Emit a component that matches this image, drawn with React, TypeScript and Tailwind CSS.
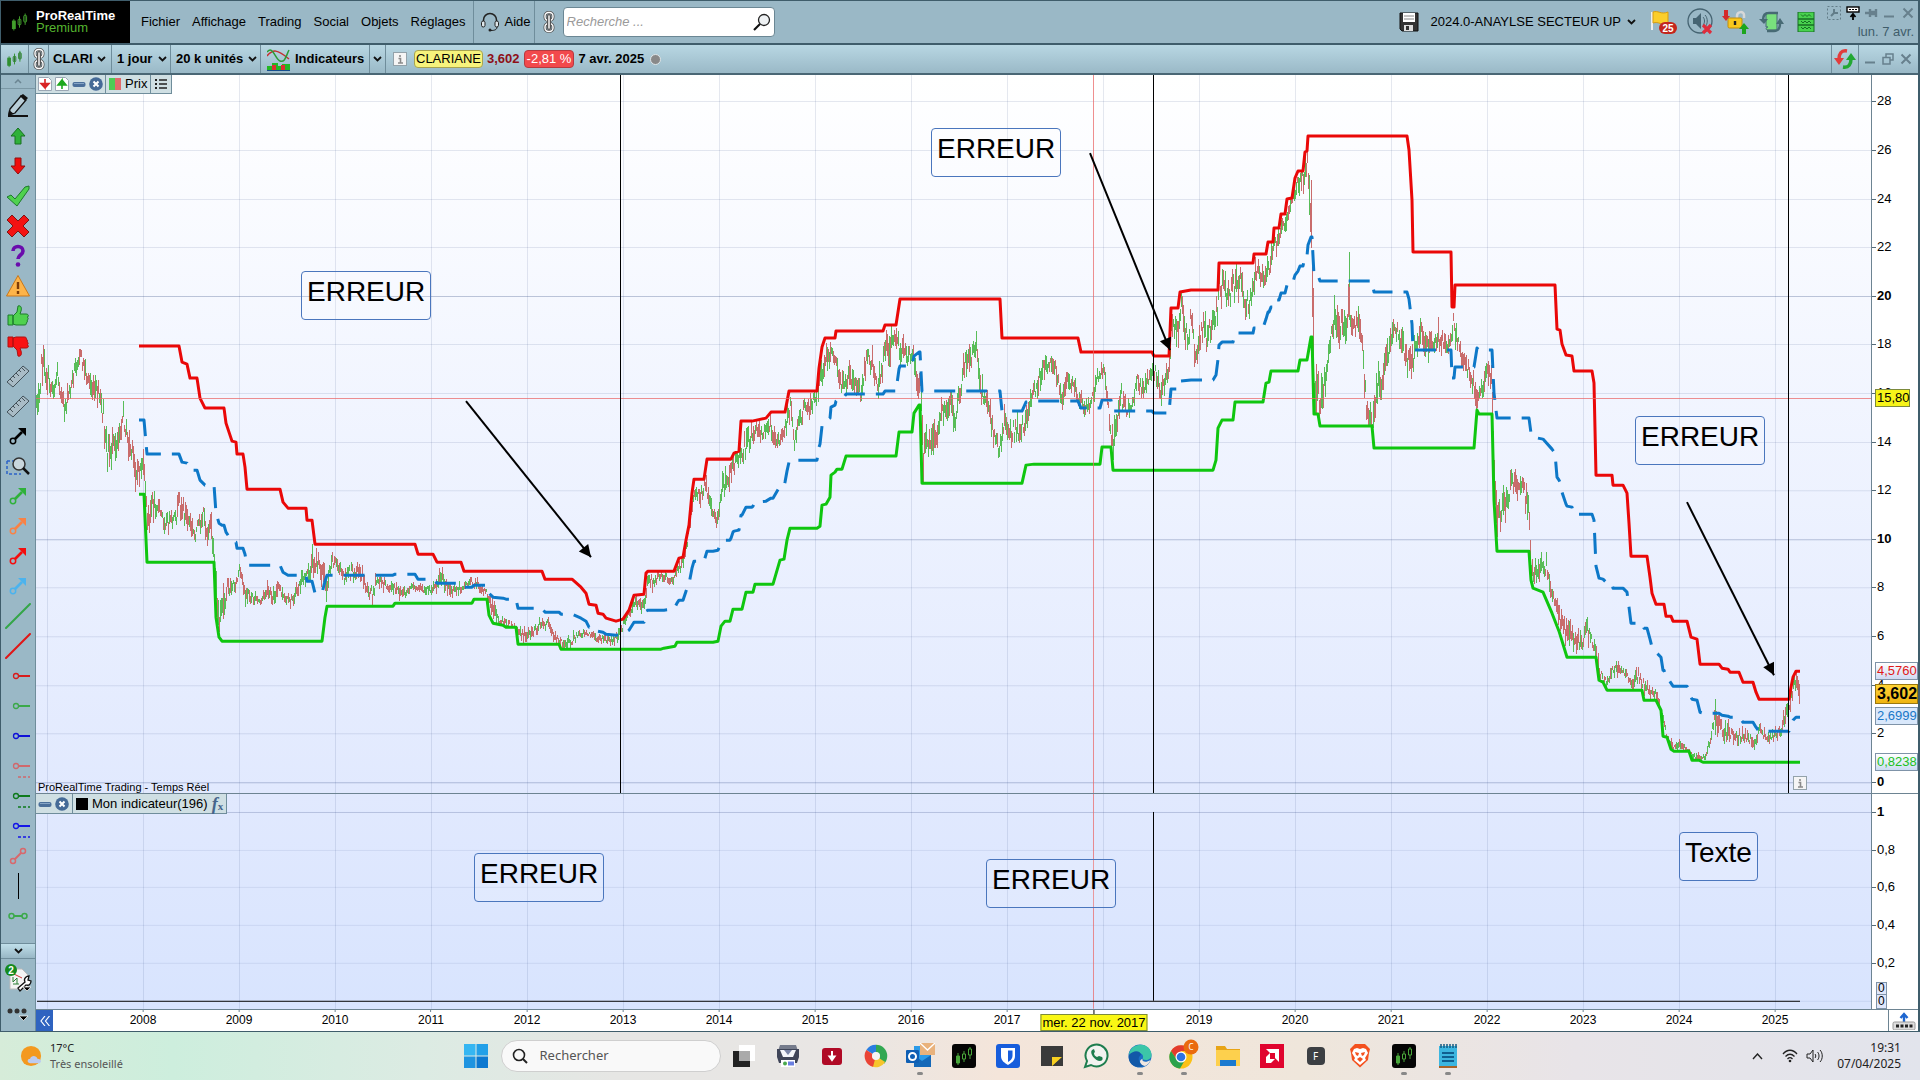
import React from 'react';

type Pt = [number, number];

const parse = (s: string): Pt[] =>
  s.trim().split(/\s+/).map((p) => p.split(',').map(Number) as Pt);

const upper = parse(`139,346 179,346 182,362 187,364 190,378 197,378 200,398 205,408 224,408 226,423 232,441 236,442 237,454 243,454 245,467 247,489 280,489 283,502 288,508 306,508 307,520 312,520 315,544 415,544 418,554 433,554 437,562 461,562 464,571 542,571 545,579 572,579 581,587 586,593 589,604 596,605 598,613 603,614 606,618 616,621 623,619 629,610 634,595 644,594 646,573 648,571 674,571 679,558 683,557 686,540 689,525 692,493 694,479 704,479 707,459 731,459 734,453 739,451 741,421 752,421 766,418 771,412 785,412 789,391 817,391 819,368 822,347 825,338 835,338 836,331 883,331 885,325 896,325 900,299 1000,299 1002,338 1078,338 1081,352 1152,352 1154,356 1169,356 1171,308 1178,308 1180,292 1191,290 1218,290 1219,263 1253,263 1254,254 1266,254 1268,242 1273,242 1274,228 1279,228 1281,214 1285,214 1287,199 1292,198 1295,178 1298,171 1303,171 1305,152 1307,151 1308,136 1407,136 1409,150 1412,200 1413,252 1451,252 1452,307 1454,307 1455,285 1555,285 1557,329 1560,330 1562,344 1566,355 1572,356 1574,371 1592,371 1594,383 1596,475 1612,475 1613,485 1623,485 1627,493 1629,523 1631,556 1647,556 1650,577 1652,593 1656,604 1664,604 1666,616 1671,616 1673,621 1687,621 1691,637 1697,639 1700,664 1719,664 1722,668 1728,669 1730,672 1739,672 1743,682 1753,682 1756,692 1759,699 1789,699 1791,687 1793,677 1796,671 1800,671`);

const lower = parse(`139,494 144,494 147,562 214,562 216,617 219,637 222,641 322,641 325,617 327,606 393,606 395,603 472,603 474,599 487,599 489,615 493,623 503,625 506,627 516,627 518,644 559,644 561,649 661,649 664,648 675,646 677,642 713,642 718,641 721,626 725,621 730,621 733,609 742,609 746,592 753,592 755,584 773,584 780,560 784,559 787,540 790,528 817,528 820,526 822,505 826,504 830,497 831,475 835,472 837,469 842,469 846,456 896,456 899,432 912,432 914,413 919,405 920,405 922,483 1022,483 1026,465 1034,464 1100,464 1102,447 1111,447 1113,470 1213,470 1216,460 1218,428 1222,420 1233,420 1235,402 1263,402 1266,383 1269,382 1271,371 1298,371 1300,360 1307,360 1311,337 1312,337 1314,414 1318,414 1320,426 1372,426 1374,448 1474,448 1477,410 1479,414 1492,414 1494,500 1497,551 1529,551 1531,580 1533,588 1543,592 1552,613 1559,631 1567,657 1596,657 1599,680 1603,682 1607,690 1642,690 1644,700 1656,700 1661,710 1663,736 1667,737 1671,749 1674,751 1689,751 1692,760 1699,760 1703,762 1800,762`);

/* price track: x, centre, half range */
const track = `36,400,12 39,385,15 42,362,15 46,375,12 50,385,12 54,388,8 57,372,10 60,390,8 63,410,15 67,400,10 71,385,10 74,370,8 79,354,8 84,368,10 88,380,10 93,392,10 97,392,12 100,402,10 103,415,15 105,450,20 109,450,15 114,450,15 119,430,10 123,415,10 127,440,12 130,450,15 134,465,15 138,475,12 142,462,12 145,490,15 147,525,12 151,505,12 157,505,8 163,520,8 168,523,8 175,520,8 179,503,12 184,512,12 190,525,10 194,535,8 199,524,8 203,515,8 206,530,10 210,530,12 213,545,15 216,600,30 219,625,10 223,605,20 226,590,10 232,586,6 236,583,6 239,570,8 243,590,10 250,597,7 260,602,4 266,592,8 272,597,6 279,588,8 284,600,5 290,602,5 296,592,6 303,578,8 308,575,8 313,560,12 318,565,10 322,570,12 326,588,10 331,558,8 336,563,6 343,577,7 350,573,8 358,570,6 362,576,8 366,588,6 372,593,10 377,580,6 386,586,5 395,590,6 404,594,5 412,588,4 422,590,4 432,588,5 440,576,8 446,584,6 451,592,6 460,588,4 470,582,4 478,585,4 486,593,5 493,612,8 500,622,5 508,625,5 518,632,4 525,636,6 533,633,5 540,623,5 548,624,5 553,636,5 560,643,4 568,643,6 577,636,4 587,633,3 595,637,4 604,639,4 613,640,4 620,635,6 624,622,4 629,613,4 634,602,5 640,605,6 645,598,6 648,577,6 653,585,7 658,576,4 665,577,4 672,582,4 676,572,4 683,562,6 688,535,8 694,490,6 700,498,8 705,485,10 711,510,8 716,523,6 722,485,12 727,485,14 732,465,10 737,458,8 742,450,14 748,440,10 755,430,8 762,432,8 770,425,7 775,440,10 782,436,8 786,422,10 791,405,10 794,445,10 800,418,10 805,402,8 810,410,12 815,397,8 820,378,10 827,355,12 833,352,10 838,378,10 843,385,10 848,375,12 854,382,10 860,393,8 866,360,12 872,362,10 878,385,12 882,372,15 885,343,12 890,345,15 895,337,10 900,350,14 906,358,10 912,350,10 916,375,10 920,385,15 923,455,18 928,440,12 932,445,15 938,425,12 944,408,10 950,400,10 955,420,14 960,390,10 965,358,12 970,355,14 976,347,10 979,385,12 984,395,10 989,405,12 994,440,10 999,452,10 1004,420,12 1010,432,12 1018,430,12 1024,425,10 1030,400,8 1036,385,10 1042,370,10 1050,363,8 1056,372,10 1061,405,10 1067,382,8 1072,380,8 1078,400,8 1084,405,8 1090,405,6 1095,388,8 1099,370,8 1104,375,8 1109,420,10 1113,445,20 1116,425,12 1120,395,14 1126,410,8 1132,408,8 1136,380,8 1142,388,8 1150,375,7 1155,370,8 1160,395,12 1165,380,8 1169,370,8 1171,335,14 1174,330,12 1178,325,15 1181,305,12 1184,330,15 1188,340,12 1191,310,15 1195,360,10 1199,345,12 1203,320,12 1207,345,14 1211,320,14 1215,325,14 1219,285,18 1224,290,12 1229,298,12 1234,285,15 1240,278,12 1245,305,10 1250,300,12 1255,270,12 1261,272,12 1266,280,12 1272,250,10 1277,242,8 1283,227,8 1289,210,8 1295,190,8 1299,183,10 1303,178,10 1307,158,12 1309,185,30 1311,230,40 1312,300,60 1314,370,30 1317,400,25 1321,395,20 1325,380,18 1329,345,12 1334,315,15 1340,325,15 1346,325,15 1349,308,20 1353,320,14 1358,328,15 1362,335,15 1364,390,20 1367,412,14 1372,425,15 1375,410,20 1378,385,18 1384,372,12 1390,345,14 1394,325,10 1400,340,12 1406,360,12 1412,365,12 1418,335,12 1422,328,12 1427,350,12 1432,345,10 1438,335,12 1446,350,10 1453,325,12 1458,345,8 1463,365,10 1468,370,10 1474,385,12 1478,400,8 1485,375,10 1491,378,14 1494,490,25 1497,515,15 1502,510,15 1507,500,12 1511,482,12 1517,490,10 1523,490,12 1528,510,14 1531,572,12 1536,572,10 1542,568,10 1546,565,10 1550,588,8 1555,603,8 1561,622,10 1566,630,14 1574,640,8 1580,643,10 1587,630,9 1593,645,8 1597,660,8 1600,675,5 1606,683,5 1611,672,5 1617,668,6 1624,673,4 1631,684,5 1638,675,6 1645,688,6 1653,692,6 1658,703,6 1663,725,8 1668,740,5 1673,748,3 1678,745,4 1685,748,3 1692,756,3 1700,758,3 1705,757,3 1709,745,6 1712,728,6 1715,715,14 1720,728,10 1727,732,8 1735,738,6 1742,735,6 1750,739,5 1755,742,5 1760,729,6 1765,737,5 1772,737,5 1780,732,5 1785,715,10 1788,708,8 1791,695,10 1795,680,8 1798,682,10 1799,692,16`
  .split(' ')
  .map((p) => p.split(',').map(Number));

const valueAt = (line: Pt[], x: number): number => {
  for (let i = 1; i < line.length; i++) {
    if (x <= line[i][0]) {
      const [x0, y0] = line[i - 1];
      const [x1, y1] = line[i];
      return y0 + ((y1 - y0) * (x - x0)) / (x1 - x0 || 1);
    }
  }
  return line[line.length - 1][1];
};

const toPoints = (line: Pt[]) => line.map((p) => p.join(',')).join(' ');

const median: Pt[] = Array.from(new Set([...upper, ...lower].map((p) => p[0])))
  .sort((a, b) => a - b)
  .map((x) => [x, Math.round((valueAt(upper, x) + valueAt(lower, x)) / 2)]);

const candles = (() => {
  let seed = 7;
  const rnd = () => {
    seed = (seed * 1103515245 + 12345) % 2147483648;
    return seed / 2147483648;
  };
  const centre: Pt[] = track.map((t) => [t[0], t[1]]);
  const range: Pt[] = track.map((t) => [t[0], t[2]]);
  let up = '';
  let down = '';
  for (let x = 36; x < 1800; x++) {
    const r = valueAt(range, x);
    const c = valueAt(centre, x) + (rnd() - 0.5) * r * 1.5;
    const h = r * (0.3 + rnd() * 0.8);
    let top = c - h;
    let bottom = c + h;
    if (x > 140) {
      top = Math.max(top, valueAt(upper, x));
      bottom = Math.min(bottom, valueAt(lower, x));
    }
    if (bottom <= top) continue;
    const seg = `M${x}.5 ${Math.round(top)}V${Math.round(bottom)}`;
    const falling = valueAt(centre, x + 2) > valueAt(centre, x - 2);
    if (rnd() < (falling ? 0.3 : 0.6)) up += seg;
    else down += seg;
  }
  return { up: up + 'M1349.5 252V320M1715.5 699V735', down };
})();

const years = Array.from({ length: 18 }, (_, i) => 2008 + i);
const yearX = (y: number) => Math.round(142.6 + (y - 2008) * 96.03);
const priceY = (v: number) => Math.floor(782.3 - v * 24.3);
const LEFT = 36;
const WIDTH = 1835;
const TOP = 75;
const H1 = 718;
const TOP2 = 794;
const H2 = 215;
const px = (x: number) => `${((x - LEFT) / WIDTH) * 100}%`;
const py = (y: number) => `${((y - TOP) / H1) * 100}%`;
const py2 = (y: number) => `${((y - TOP2) / H2) * 100}%`;

function Ic({ w, h, vb, children, className = '' }: { w: number; h: number; vb?: string; children: React.ReactNode; className?: string }) {
  return (
    <svg width={w} height={h} viewBox={vb ?? `0 0 ${w} ${h}`} fill="none" className={`block shrink-0 ${className}`} aria-hidden="true">
      {children}
    </svg>
  );
}

const Chevron = ({ color = '#111' }: { color?: string }) => (
  <Ic w={9} h={6}><path d="M1 1l3.5 3.5L8 1" stroke={color} strokeWidth="1.8" /></Ic>
);

const Candles = ({ w = 18, h = 20, c = '#2f8f2f' }: { w?: number; h?: number; c?: string }) => (
  <Ic w={w} h={h} vb="0 0 18 20">
    <path d="M3 7v12M9 4v12M15 1v12" stroke={c} />
    <rect x="1.5" y="9" width="3" height="8" fill={c} stroke={c} />
    <rect x="7.5" y="7" width="3" height="6" rx="1" fill="#1d3a1d" fillOpacity=".35" stroke={c} />
    <rect x="13.5" y="3" width="3" height="7" rx="1" fill="#1d3a1d" fillOpacity=".35" stroke={c} />
  </Ic>
);

const Chain = () => (
  <Ic w={12} h={22}>
    <rect x="2" y="1.5" width="8" height="8" rx="3.5" stroke="#555" strokeWidth="3" />
    <rect x="2" y="1.5" width="8" height="8" rx="3.5" stroke="#fff" strokeWidth="1.4" />
    <rect x="2" y="12.5" width="8" height="8" rx="3.5" stroke="#555" strokeWidth="3" />
    <rect x="2" y="12.5" width="8" height="8" rx="3.5" stroke="#fff" strokeWidth="1.4" />
    <path d="M6 5v12" stroke="#555" strokeWidth="4" strokeLinecap="round" />
    <path d="M6 5v12" stroke="#eee" strokeWidth="1.6" strokeLinecap="round" />
  </Ic>
);

const CrossIc = () => <Ic w={12} h={12}><path d="M1.5 1.5l9 9M10.5 1.5l-9 9" stroke="#67808d" strokeWidth="2" /></Ic>;
const MinIc = () => <Ic w={12} h={12}><path d="M1 9.500h10" stroke="#67808d" strokeWidth="2" /></Ic>;
const InfoIc = () => (
  <Ic w={14} h={14}>
    <rect x=".5" y=".5" width="13" height="13" fill="#f5f5f5" stroke="#93a2aa" />
    <path d="M7 3v2M5.5 6.500H7.500V11M5 11h5" stroke="#8a8a8a" strokeWidth="1.6" />
  </Ic>
);
const BarIc = () => (
  <Ic w={14} h={14}><rect x=".5" y="5" width="13" height="5" rx="2" fill="#4a6f9b" /><path d="M2 6.500h10" stroke="#86a5c6" /></Ic>
);
const CloseDot = () => (
  <Ic w={14} h={14}><circle cx="7" cy="7" r="6.8" fill="#456a97" /><path d="M4.5 4.5l5 5M9.5 4.5l-5 5" stroke="#fff" strokeWidth="2" /></Ic>
);
const ArrowDoc = ({ up }: { up?: boolean }) => (
  <Ic w={14} h={14}>
    <path d="M.5.5h10l3 3v10H.5z" fill="#fff" stroke="#9aa7b4" />
    {up ? <path d="M7 12V3l-4 5h8l-4-5" fill="#1ea81e" stroke="#1ea81e" strokeWidth="1.6" /> : <path d="M7 2v9L3 6.500h8L7 11" fill="#d82424" stroke="#d82424" strokeWidth="1.6" />}
  </Ic>
);

const thumb = 'M2 11h5v10H2zM7 12l4-4 1-6c3-1 4 2 3 5l-1 3h6c3 0 3 3 1 3 2 1 1 3 0 3 1 1 0 3-1 3 1 1 0 2-2 2H10l-3-1z';
const ray = (c: string, dots?: boolean) => (
  <Ic w={24} h={24}>
    <circle cx="10" cy="12" r="2.5" stroke={c} strokeWidth="1.3" />
    <path d="M12 12h13" stroke={c} strokeWidth="2" />
    {dots && <path d="M12 23h12" stroke={c} strokeWidth="1.5" strokeDasharray="3 2" />}
  </Ic>
);
const arrow = (c: string) => (
  <Ic w={24} h={24}>
    <circle cx="7" cy="17" r="2.7" stroke={c} strokeWidth="1.5" />
    <path d="M9 15l7-7" stroke={c} strokeWidth="2.6" />
    <path d="M12 4h8v8z" fill={c} />
  </Ic>
);
const ruler = (
  <Ic w={24} h={24}>
    <path d="M1 18L17 2l6 5L7 23z" fill="#a9bcc6" stroke="#44525a" />
    <path d="M4 15l3 3M7 12l2 2M10 9l3 3M13 6l2 2M16 4l3 3" stroke="#44525a" />
  </Ic>
);
const diag = (c: string) => <Ic w={26} h={26}><path d="M1 25L25 1" stroke={c} strokeWidth="2" strokeLinecap="round" /></Ic>;

const tools: [string, React.ReactNode][] = [
  ['Crayon', <Ic w={24} h={24}><path d="M4 15L15 2l5 4L9 19l-6 2z" fill="#b9ced8" stroke="#111" strokeWidth="1.3" /><path d="M14 2l3-2 5 4-3 3zM3 16l-1 5 6-1z" fill="#111" /><path d="M2 22h20" stroke="#111" strokeWidth="2" /></Ic>],
  ['Flèche haut', <Ic w={24} h={24}><path d="M12 4l7 8h-4v8H9v-8H5z" fill="#2fb13a" stroke="#187020" /></Ic>],
  ['Flèche bas', <Ic w={24} h={24}><path d="M12 20l7-8h-4V4H9v8H5z" fill="#f00d0d" stroke="#901010" /></Ic>],
  ['Coche', <Ic w={24} h={24}><path d="M1 13l4-2 4 4L19 3l4-1v3L11 22z" fill="#4fd14f" stroke="#1d7a2c" /></Ic>],
  ['Croix', <Ic w={24} h={24}><path d="M6 1l6 6 6-6 5 5-6 6 6 6-5 5-6-6-6 6-5-5 6-6-6-6z" fill="#f31212" stroke="#7c1515" /></Ic>],
  ['Question', <Ic w={24} h={24}><path d="M7 7c0-6 10-6 10 0 0 4-5 4-5 8" stroke="#6a0dad" strokeWidth="3.6" /><circle cx="12" cy="20.5" r="2.3" fill="#6a0dad" /></Ic>],
  ['Attention', <Ic w={24} h={24}><path d="M12 1.5L23.5 22H.5z" fill="#fdb44a" stroke="#c8771a" strokeLinejoin="round" /><path d="M12 8v7M12 17v3" stroke="#7c3b08" strokeWidth="2.4" /></Ic>],
  ['Pouce haut', <Ic w={24} h={24}><path d={thumb} fill="#4fd14f" stroke="#1d7a2c" /></Ic>],
  ['Pouce bas', <Ic w={24} h={24}><g transform="matrix(1 0 0 -1 0 24)"><path d={thumb} fill="#fa1212" stroke="#b01010" /></g></Ic>],
  ['Règle', ruler],
  ['Règle 2', ruler],
  ['Flèche noire', arrow('#000')],
  ['Zoom', <Ic w={24} h={24}><path d="M1 7v13h14M1 7h8" stroke="#2b62c8" strokeWidth="1.5" strokeDasharray="3 2" /><circle cx="13" cy="10" r="6" fill="#c9d6dc" stroke="#333" strokeWidth="1.5" /><path d="M17 14l6 6" stroke="#111" strokeWidth="2.5" /></Ic>],
  ['Flèche verte', arrow('#2fb13a')],
  ['Flèche orange', arrow('#f98245')],
  ['Flèche rouge', arrow('#f40d0d')],
  ['Flèche bleue', arrow('#4bb3ee')],
  ['Ligne verte', diag('#34a648')],
  ['Ligne rouge', diag('#e01616')],
  ['Rayon rouge', ray('#d81c1c')],
  ['Rayon vert', ray('#3ba94a')],
  ['Rayon bleu', ray('#1010d8')],
  ['Rayon rose', ray('#d0686c', true)],
  ['Rayon vert foncé', ray('#0e7a1c', true)],
  ['Rayon bleu pointillé', ray('#1515e8', true)],
  ['Segment rose', <Ic w={24} h={24}><circle cx="7" cy="17" r="2.5" stroke="#d8686c" strokeWidth="1.5" /><circle cx="17" cy="7" r="2.5" stroke="#d8686c" strokeWidth="1.5" /><path d="M9 15l6-6" stroke="#d8686c" strokeWidth="2" /></Ic>],
  ['Ligne verticale', <Ic w={24} h={26}><path d="M12.5 0v26" stroke="#000" /></Ic>],
  ['Segment vert', <Ic w={24} h={24}><circle cx="5.5" cy="12" r="2.5" stroke="#3ba94a" strokeWidth="1.5" /><circle cx="18.5" cy="12" r="2.5" stroke="#3ba94a" strokeWidth="1.5" /><path d="M8 12h8" stroke="#3ba94a" strokeWidth="2" /></Ic>],
];

function Header() {
  return (
    <header className="flex h-[45px] shrink-0 items-center border-t border-b-2 border-[#3f5d6b] bg-[#9ab8c6] text-[13px] text-black">
      <div className="flex h-full w-[129px] items-center gap-2 bg-black pl-[10px]">
        <Candles w={17} h={20} c="#43a02c" />
        <div className="leading-[12px]">
          <div className="font-bold text-white">ProRealTime</div>
          <div className="text-[#55b52f]">Premium</div>
        </div>
      </div>
      <nav className="flex items-center gap-3 pl-[11px]">
        {['Fichier', 'Affichage', 'Trading', 'Social', 'Objets', 'Réglages'].map((m) => (
          <button key={m} type="button">{m}</button>
        ))}
      </nav>
      <button type="button" className="ml-[7px] flex h-full items-center gap-[5px] border-x border-[#6f8d9b] pr-[3px] pl-[6px]">
        <Ic w={20} h={20}>
          <path d="M3.5 10V8a6.5 6.5 0 0113 0v2" stroke="#222" strokeWidth="1.5" />
          <rect x="1.5" y="9" width="3.5" height="6" rx="1.7" fill="#dfe8ec" stroke="#222" />
          <rect x="15" y="9" width="3.5" height="6" rx="1.7" fill="#dfe8ec" stroke="#222" />
          <path d="M17 15c0 3-3 3.5-6 3.5" stroke="#222" />
          <circle cx="10" cy="18" r="1.5" fill="#222" />
        </Ic>
        Aide
      </button>
      <div className="ml-2 flex items-center gap-2">
        <Chain />
        <label className="flex h-[30px] w-[212px] items-center rounded-sm border border-[#6b8794] bg-white pr-[3px] pl-[3px]">
          <input aria-label="Recherche" placeholder="Recherche ..." className="min-w-0 flex-1 bg-transparent italic outline-none placeholder:text-[#9a9a9a]" />
          <Ic w={18} h={18}><circle cx="11" cy="7" r="5.5" fill="#eef1f3" stroke="#222" strokeWidth="1.3" /><path d="M7 11l-6 6" stroke="#111" strokeWidth="2.2" /></Ic>
        </label>
      </div>
      <div className="ml-auto flex items-center pr-1">
        <Ic w={20} h={20}>
          <path d="M1 1h18v18H3l-2-2z" fill="#333" stroke="#111" />
          <rect x="4" y="1" width="12" height="9" fill="#fff" /><path d="M5 4h10M5 7h10" stroke="#888" />
          <rect x="5" y="13" width="9" height="6" fill="#ddd" /><rect x="7" y="14" width="3" height="4" fill="#333" />
        </Ic>
        <button type="button" className="ml-3 flex items-center gap-[6px] whitespace-nowrap">2024.0-ANAYLSE SECTEUR UP <Chevron /></button>
        <div className="ml-[14px] flex items-center gap-[9px]">
          <Ic w={28} h={24} className="overflow-visible">
            <path d="M2 2v18" stroke="#eee" strokeWidth="2" /><path d="M3 2c5-2 8 3 15 0v11c-7 3-9-2-15 0z" fill="#fbce2c" stroke="#d89d10" />
            <rect x="9" y="12" width="18" height="12" rx="6" fill="#c4261d" />
            <text x="18" y="22" fontSize="10" fontWeight="bold" fill="#fff" textAnchor="middle">25</text>
          </Ic>
          <Ic w={26} h={28}>
            <circle cx="13" cy="13" r="12" stroke="#466472" strokeWidth="1.3" />
            <path d="M6 10h3l5-5v16l-5-5H6z" fill="#466472" /><path d="M16 9c2 2 2 6 0 8M18 7c3 3 3 9 0 12" stroke="#466472" />
            <path d="M16 17l8 8M24 17l-8 8" stroke="#df2c3c" strokeWidth="3.2" />
          </Ic>
          <Ic w={28} h={24}>
            <path d="M4 0v7" stroke="#d42a2a" strokeWidth="4" /><path d="M0 6h8l-4 5z" fill="#d42a2a" />
            <path d="M15 9V6c0-5 7-5 7-1v3" stroke="#d8d8d8" strokeWidth="2.5" />
            <rect x="6" y="8" width="14" height="10" rx="1.5" fill="#f8c71c" stroke="#c08c0c" /><path d="M13 11v4" stroke="#222" strokeWidth="2.4" />
            <path d="M22 24v-6" stroke="#1da51d" strokeWidth="4" /><path d="M17 19h10l-5-6z" fill="#1da51d" />
          </Ic>
          <Ic w={26} h={24}>
            <path d="M7 3h11v17H9c-3 0-2-3 0-3H7z" fill="#79e07d" stroke="#476a74" />
            <path d="M19 3H10C5 3 4 6 4 10" stroke="#476a74" strokeWidth="2.5" /><path d="M0 9h9l-4 5z" fill="#476a74" />
            <path d="M8 21h7c5 0 6-3 6-8" stroke="#476a74" strokeWidth="2.5" /><path d="M17 14h8l-4-6z" fill="#476a74" />
          </Ic>
        </div>
        <Ic w={18} h={20} className="ml-3">
          <rect x="1" y="0" width="16" height="20" fill="#48d24e" stroke="#176f25" /><path d="M1 7h16M1 13h16" stroke="#176f25" strokeWidth="1.5" />
          <path d="M4 2.5l2 2 2-2 2 2 2-2 2 2M4 9l2 2 2-2 2 2 2-2 2 2M4 15l2 2 2-2 2 2 2-2 2 2" stroke="#176f25" />
        </Ic>
        <div className="ml-3 flex flex-col items-end gap-1 text-[13px] leading-[14px] text-[#3f5d6b]">
          <div className="flex h-4 items-center gap-[5px]">
            <Ic w={14} h={14}><rect x=".5" y=".5" width="13" height="13" stroke="#627d89" strokeDasharray="2 2" /><path d="M4 10l4-4M7 3v4h4" stroke="#627d89" strokeWidth="2" /></Ic>
            <Ic w={14} h={14}><rect x="1" y="1" width="12" height="5" fill="#fff" stroke="#000" strokeWidth="1.4" /><path d="M3 3.5h8" stroke="#000" strokeDasharray="2 1" /><path d="M7 14V9M4.5 11L7 8l2.5 3" stroke="#000" strokeWidth="1.8" /></Ic>
            <Ic w={13} h={12}><path d="M0 6h5M5 2v8M5 5h6v2H5M11 2v8" stroke="#67808d" strokeWidth="2.4" /></Ic>
            <MinIc />
            <span className="pl-[2px]"><CrossIc /></span>
          </div>
          <span>lun. 7 avr.</span>
        </div>
      </div>
    </header>
  );
}

function Toolbar() {
  const cell = 'flex h-full items-center border-r border-[#6f8d9b]';
  return (
    <div className="flex h-[30px] shrink-0 items-center border-b-2 border-[#4a6775] bg-linear-to-b from-[#b8d7e3] to-[#9ab9c7] text-[13px] font-bold text-black">
      <div className={`${cell} w-[28px] justify-center`}><Candles w={17} h={18} /></div>
      <div className={`${cell} w-[20px] justify-center`}><Chain /></div>
      <button type="button" className={`${cell} w-[63px] justify-between pr-[5px] pl-1`}>CLARI <Chevron /></button>
      <button type="button" className={`${cell} w-[59px] justify-between pr-[3px] pl-[5px]`}>1 jour <Chevron /></button>
      <button type="button" className={`${cell} w-[90px] justify-between pr-[3px] pl-[5px]`}>20 k unités <Chevron /></button>
      <button type="button" className={`${cell} w-[109px] gap-[5px] pl-[6px]`}>
        <Ic w={23} h={23}>
          <path d="M0 8c6-7 10-7 22 3" stroke="#c53030" strokeWidth="1.5" /><path d="M0 4c6-7 8 7 13 9s6-5 9-11" stroke="#2b9c35" strokeWidth="1.5" />
          <path d="M0 18h5v-3h6v3h4v-2h8v7H0z" fill="#22b822" /><path d="M5 17h4v5H5zM14 17h4v5h-4z" fill="#dd3030" /><path d="M0 22.5h23" stroke="#164f8f" />
        </Ic>
        Indicateurs
      </button>
      <button type="button" aria-label="Liste des indicateurs" className={`${cell} w-[16px] justify-center`}><Chevron /></button>
      <div className="flex items-center gap-1 pl-[7px] whitespace-nowrap">
        <InfoIc />
        <span className="ml-[3px] flex h-[18px] items-center rounded-sm border border-[#a8a450] bg-[#f7f37c] px-px font-normal">CLARIANE</span>
        <span className="text-[#8e1018]">3,602</span>
        <span className="flex h-[18px] items-center rounded-sm border border-[#b63a3f] bg-[#f2494c] px-[2px] font-normal text-white">-2,81 %</span>
        <span>7 avr. 2025</span>
        <span className="ml-[2px] size-[11px] rounded-full border border-[#dfe6e9] bg-[#898989]" />
      </div>
      <div className="ml-auto flex h-full items-center">
        <button type="button" aria-label="Actualiser" className="flex h-full w-[28px] items-center justify-center border-x border-[#6f8d9b]">
          <Ic w={22} h={20}>
            <path d="M13 2C7 1 5 5 5 10" stroke="#e23c3c" strokeWidth="3.5" /><path d="M0 9h10l-5 7z" fill="#e23c3c" />
            <path d="M9 18c6 1 8-3 8-8" stroke="#22a833" strokeWidth="3.5" /><path d="M12 11h10l-5-7z" fill="#22a833" />
          </Ic>
        </button>
        <div className="flex items-center gap-[6px] pr-[6px] pl-[5px]">
          <MinIc />
          <Ic w={12} h={12}><path d="M4 4V1h7v6H8M1 4.500h7V11H1z" stroke="#67808d" strokeWidth="1.5" /></Ic>
          <CrossIc />
        </div>
      </div>
    </div>
  );
}

function Sidebar() {
  return (
    <aside className="flex w-[35px] shrink-0 flex-col border-r border-[#6f8d9b] bg-[#9ab8c6]">
      <button type="button" aria-label="Défiler vers le haut" className="flex h-[14px] items-center justify-center border-b border-[#7b98a5]">
        <Ic w={8} h={5}><path d="M1 4l3-3 3 3" stroke="#6b8592" strokeWidth="1.5" /></Ic>
      </button>
      <div className="flex min-h-0 flex-1 flex-col overflow-hidden pt-[2px]">
        {tools.map(([name, icon]) => (
          <button key={name} type="button" aria-label={name} className="flex h-[30px] shrink-0 items-center justify-center">{icon}</button>
        ))}
      </div>
      <button type="button" aria-label="Défiler vers le bas" className="flex h-[16px] shrink-0 items-center justify-center border-y border-[#6f8d9b] bg-linear-to-b from-[#c0dfea] to-[#98b7c5]"><Chevron /></button>
      <button type="button" aria-label="Gestion des graphiques" className="flex h-[38px] shrink-0 items-center justify-center">
        <Ic w={28} h={30}>
          <path d="M6 6h12l6 6v14H6z" fill="#f4f4f4" stroke="#bbb" /><path d="M8 10l10 5" stroke="#c33" /><path d="M9 14v5l4-4v6M9 21h6" stroke="#2a7f35" />
          <circle cx="7" cy="7" r="6" fill="#158a1f" />
          <text x="7" y="11" fontSize="10" fontWeight="bold" fill="#fff" textAnchor="middle">2</text>
          <path d="M14 25l7-6c-2-4 2-6 4-6l-1 4 3 1c0 3-2 5-5 4l-6 6z" fill="#fff" stroke="#111" strokeWidth="1.3" />
          <path d="M19 24h8l-4 4z" fill="#000" stroke="#fff" strokeWidth=".7" />
        </Ic>
      </button>
      <button type="button" aria-label="Plus d'outils" className="flex h-[34px] shrink-0 items-center justify-center">
        <Ic w={22} h={14}><circle cx="3" cy="4" r="2.5" fill="#333" /><circle cx="10" cy="4" r="2.5" fill="#333" /><circle cx="17" cy="4" r="2.5" fill="#333" /><path d="M12 9h9l-4.5 4.5z" fill="#000" stroke="#fff" strokeWidth=".7" /></Ic>
      </button>
    </aside>
  );
}

function Note({ left, top, text = 'ERREUR' }: { left: string; top: string; text?: string }) {
  return (
    <div className="absolute flex h-[49px] items-start rounded border border-[#4a76bd] bg-[#ffffff22] px-[5px] pt-1 text-[28px] leading-8 text-black" style={{ left, top }}>{text}</div>
  );
}

const Grid = ({ y0, y1 }: { y0: number; y1: number }) => (
  <>
    {[2007, ...years].map((y) => (
      <path key={y} d={`M${yearX(y)}.5 ${y0}V${y1}`} stroke="#334a80" strokeOpacity=".13" />
    ))}
  </>
);

function Arrow({ x1, y1, x2, y2 }: { x1: number; y1: number; x2: number; y2: number }) {
  const a = (Math.atan2(y2 - y1, x2 - x1) * 180) / Math.PI;
  return (
    <g>
      <line x1={x1} y1={y1} x2={x2} y2={y2} stroke="#000" strokeWidth="2" />
      <path d="M0 0L-12 -6V6z" fill="#000" transform={`translate(${x2} ${y2}) rotate(${a})`} />
    </g>
  );
}

function PricePanel() {
  return (
    <section className="relative min-w-0 flex-1 bg-linear-to-b from-white to-[#e1e9fe]">
      <svg className="absolute inset-0 block size-full" viewBox={`${LEFT} ${TOP} ${WIDTH} ${H1}`} preserveAspectRatio="none" fill="none" role="img" aria-label="Cours CLARIANE">
        <Grid y0={75} y1={793} />
        {Array.from({ length: 15 }, (_, i) => i * 2).map((v) => (
          <path key={v} d={`M36 ${priceY(v)}.5H1871`} stroke="#334a80" strokeOpacity={v % 10 === 0 ? 0.3 : 0.13} />
        ))}
        <g shapeRendering="crispEdges">
          <path d={candles.up} stroke="#58bd58" />
          <path d={candles.down} stroke="#c96c6c" />
        </g>
        <g strokeWidth="3" strokeLinejoin="round">
          <polyline points={toPoints(median)} stroke="#0d78c8" strokeDasharray="21 11" />
          <polyline points={toPoints(lower)} stroke="#0fc60f" />
          <polyline points={toPoints(upper)} stroke="#ea0808" />
        </g>
        <path d="M36 398.5H1871M1093.5 75V793" stroke="#e96a6a" strokeOpacity=".75" />
        <path d="M620.5 75V793M1153.5 75V793M1788.5 75V793" stroke="#000" />
        <Arrow x1={466} y1={401} x2={591} y2={557} />
        <Arrow x1={1090} y1={153} x2={1170} y2={350} />
        <Arrow x1={1687} y1={502} x2={1774} y2={675} />
      </svg>
      <div className="absolute top-0 left-0 flex h-[19px] items-center border-r border-b border-[#6f8d9b] bg-[#cfdfe3] text-[13px]">
        <div className="flex h-full items-center gap-[3px] border-r border-[#6f8d9b] px-[2px]"><ArrowDoc /><ArrowDoc up /><BarIc /><CloseDot /></div>
        <div className="flex h-full items-center gap-1 border-r border-[#6f8d9b] px-[3px]"><Ic w={12} h={12}><path d="M0 0h6v12H0z" fill="#4ccb55" /><path d="M6 0h6v12H6z" fill="#e06a6c" /></Ic>Prix</div>
        <div className="px-1"><Ic w={12} h={12}><path d="M4 2h8M4 6h8M4 10h8" stroke="#222" strokeWidth="1.6" /><path d="M0 2h2M0 6h2M0 10h2" stroke="#222" strokeWidth="2" /></Ic></div>
      </div>
      <Note left={px(301)} top={py(271)} />
      <Note left={px(931)} top={py(128)} />
      <Note left={px(1635)} top={py(416)} />
      <div className="absolute bottom-0 left-[2px] text-[11px] leading-[11px] text-black">ProRealTime Trading - Temps Réel</div>
      <div className="absolute bottom-[3px]" style={{ left: px(1793) }}><InfoIc /></div>
    </section>
  );
}

function Tag({ y, className, children }: { y: number; className: string; children: string }) {
  return <div className={`absolute right-0 left-[3px] -translate-y-1/2 border px-px leading-4 ${className}`} style={{ top: py(y) }}>{children}</div>;
}

function AxisLabel({ top, bold, children }: { top: string; bold?: boolean; children: React.ReactNode }) {
  return (
    <div className="absolute left-0 flex h-4 -translate-y-1/2 items-center gap-px" style={{ top }}>
      <span className="h-px w-1 bg-[#556b78]" />
      <span className={bold ? 'font-bold' : ''}>{children}</span>
    </div>
  );
}

function PriceAxis() {
  return (
    <div className="relative w-[47px] shrink-0 border-l border-[#6d8492] bg-white text-[13px] text-black">
      {Array.from({ length: 15 }, (_, i) => i * 2).map((v) => (
        <AxisLabel key={v} top={py(priceY(v))} bold={v % 10 === 0}>{v}</AxisLabel>
      ))}
      <Tag y={398} className="mr-2 border-[#7c8a3c] bg-[#f6f319]">15,80</Tag>
      <Tag y={671} className="border-[#7f93a8] bg-linear-to-b from-white to-[#d0d9f2] text-[#e01818]">4,5760</Tag>
      <Tag y={716} className="border-[#7f93a8] bg-[#d9e8fb] text-[#1877c8]">2,6999</Tag>
      <Tag y={762} className="border-[#7f93a8] bg-linear-to-b from-white to-[#cbdcf2] text-[#20c020]">0,8238</Tag>
      <Tag y={694} className="border-[#9a7810] bg-linear-to-b from-[#ffd436] to-[#eeb410] py-px text-[16px] font-bold">3,602</Tag>
    </div>
  );
}

function IndicatorPanel() {
  return (
    <section className="relative min-w-0 flex-1 bg-linear-to-b from-[#e1e9fe] to-[#d8e4fe]">
      <svg className="absolute inset-0 block size-full" viewBox={`${LEFT} ${TOP2} ${WIDTH} ${H2}`} preserveAspectRatio="none" fill="none" role="img" aria-label="Mon indicateur">
        <Grid y0={794} y1={1009} />
        <path d="M36 812.5H1871" stroke="#334a80" strokeOpacity=".25" />
        <path d="M36 850.5H1871M36 887.5H1871M36 925.5H1871M36 963.5H1871M1800 1001.5H1871" stroke="#334a80" strokeOpacity=".1" />
        <path d="M1093.5 794V1009" stroke="#e96a6a" strokeOpacity=".75" />
        <path d="M37 1001.5H1800M1153.5 812V1001" stroke="#000" />
      </svg>
      <div className="absolute top-0 left-0 flex h-[20px] items-center border-r border-b border-[#6f8d9b] bg-[#cfdfe3] text-[13px] text-black">
        <div className="flex h-full items-center gap-[3px] border-r border-[#6f8d9b] px-[2px] pr-[3px]"><BarIc /><CloseDot /></div>
        <div className="flex items-center gap-1 px-[3px] whitespace-nowrap">
          <span className="size-3 bg-black" />Mon indicateur(196)
          <span className="font-['Liberation_Serif',serif] text-[18px] leading-4 font-bold text-[#46658c] italic">f<sub className="bottom-0 text-[11px] not-italic">x</sub></span>
        </div>
      </div>
      <Note left={px(474)} top={py2(853)} />
      <Note left={px(986)} top={py2(859)} />
      <Note left={px(1679)} top={py2(832)} text="Texte" />
    </section>
  );
}

function IndicatorAxis() {
  const rows: [string, number][] = [['1', 812], ['0,8', 850], ['0,6', 887], ['0,4', 925], ['0,2', 963]];
  return (
    <div className="relative w-[47px] shrink-0 border-l border-[#6d8492] bg-white text-[13px] text-black">
      {rows.map(([t, y]) => <AxisLabel key={t} top={py2(y)} bold={t === '1'}>{t}</AxisLabel>)}
      <div className="absolute bottom-0 left-1 flex flex-col text-[12px]">
        <span className="border border-[#7f93a8] bg-[#dfe7fb] px-px leading-[11px]">0</span>
        <span className="border border-t-0 border-[#7f93a8] bg-[#dfe7fb] px-px leading-[13px]">0</span>
      </div>
    </div>
  );
}

function TimeAxis() {
  return (
    <div className="flex h-[22px] shrink-0 border-t border-[#6d8492] bg-white text-[12px] text-black">
      <div className="relative min-w-0 flex-1">
        <button type="button" aria-label="Début" className="absolute inset-y-0 left-0 flex w-[17px] items-center justify-center bg-[#2f63c0]">
          <Ic w={10} h={10}><path d="M5 0L1 5l4 5M9.5 0l-4 5 4 5" stroke="#fff" strokeWidth="1.2" /></Ic>
        </button>
        {years.filter((y) => y !== 2018).map((y) => (
          <div key={y} className="absolute top-0 flex -translate-x-1/2 flex-col items-center" style={{ left: px(yearX(y)) }}>
            <span className="h-[2px] w-px bg-[#6d8492]" />
            <span className="leading-4">{y}</span>
          </div>
        ))}
        <div className="absolute top-0 flex -translate-x-1/2 flex-col items-center" style={{ left: px(1094) }}>
          <span className="h-1 w-px bg-black" />
          <span className="border border-[#7c8a3c] bg-[#faf714] px-px text-[13px] leading-[15px] whitespace-nowrap">mer. 22 nov. 2017</span>
        </div>
      </div>
      <div className="flex w-[47px] shrink-0 justify-end">
        <button type="button" aria-label="Clavier" className="flex w-[30px] items-center justify-center border-l border-[#6d8492]">
          <Ic w={24} h={18}><path d="M12 10V3M8.5 6L12 2l3.5 4" stroke="#1e66d0" strokeWidth="2.4" /><rect x="1" y="10" width="22" height="8" rx="1.5" fill="#ddd" stroke="#999" /><path d="M4 14h17" stroke="#222" strokeWidth="3" strokeDasharray="3 1.5" /></Ic>
        </button>
      </div>
    </div>
  );
}

const CandleTile = <Ic w={24} h={24}><rect width="24" height="24" rx="3" fill="#050505" /><path d="M6 9v12M12 7v11M18 3v12" stroke="#49a63a" /><path d="M4.5 12h3v7h-3zM10.5 10h3v5h-3zM16.5 5h3v6h-3z" fill="#050505" stroke="#49a63a" /><path d="M4.5 12h3v7h-3z" fill="#49a63a" /></Ic>;

const apps: [string, React.ReactNode, boolean][] = [
  ['Vue des tâches', <Ic w={24} h={24}><rect x="7" y="1" width="16" height="16" fill="#fff" /><path d="M1 7h17v16H1z" fill="#222" /><path d="M7 7h11v10H7z" fill="#aaa" /></Ic>, false],
  ['Imprimante', <Ic w={24} h={24}><path d="M4 1h16l2 6H2z" fill="#767c8c" /><path d="M1 5h22v8l-2 6H3l-2-6z" fill="#3f4558" /><path d="M4 6h16l-3 7H7z" fill="#f4f6fa" /><path d="M8 6l4 5 4-5z" fill="#7b86a8" /><path d="M5 16h14v7H5z" fill="#fff" /><circle cx="9" cy="19.500" r="2" fill="#49a84c" /><path d="M12 19.5h6" stroke="#6a7fe0" strokeWidth="4" /></Ic>, false],
  ['Téléchargement', <Ic w={24} h={24}><rect x="2" y="4" width="20" height="17" rx="3" fill="#b00a26" /><path d="M12 7v7M9.500 12.500l2.500 3.500 2.500-3.500z" fill="#fff" stroke="#fff" strokeWidth="2" /></Ic>, false],
  ['Navigateur coloré', <Ic w={24} h={24}><g strokeWidth="7.5"><path d="M5.500 8A7.500 7.500 0 0112 4.500" stroke="#2a7de1" /><path d="M12 4.500a7.500 7.500 0 017.500 7.500c0 2-1 4-2 5" stroke="#32a852" /><path d="M18 16a7.500 7.500 0 01-9 3" stroke="#f6c52c" /><path d="M10 19.200a7.500 7.500 0 01-4.500-11.200" stroke="#ea4435" /></g><circle cx="12" cy="12" r="4" fill="#f4f4f4" /></Ic>, false],
  ['Outlook', <Ic w={30} h={26}><path d="M9 3h17v21H9z" fill="#2c9be8" /><path d="M9 12l8 6 9-6v12H9z" fill="#1468b8" /><rect x="1" y="7" width="13" height="13" rx="1" fill="#0f5fb4" /><circle cx="7.5" cy="13.5" r="3.5" stroke="#fff" strokeWidth="2" /><path d="M15 0h15v12H15z" fill="#e9b27c" /><path d="M15 0l7.5 7L30 0" stroke="#fff" strokeWidth="1.3" /></Ic>, true],
  ['ProRealTime', CandleTile, false],
  ['Bitwarden', <Ic w={24} h={24}><rect width="24" height="24" rx="3" fill="#175ddc" /><path d="M5 4h14v8c0 5-4 7-7 9-3-2-7-4-7-9z" fill="#fff" /><path d="M12 6.5h4.5V12c0 3-2.5 5-4.5 6z" fill="#175ddc" /></Ic>, false],
  ['Pense-bêtes', <Ic w={24} h={24}><path d="M1 2h22v20H1z" fill="#3a3a3a" /><path d="M12 22v-9h10z" fill="#f8cf20" /><path d="M12 22l11-11v11z" fill="#3a3a3a" /><path d="M12 13h10l-10 9z" fill="#f8cf20" /></Ic>, false],
  ['WhatsApp', <Ic w={26} h={26}><path d="M2 24l2-6a11 11 0 114 4z" fill="#f3f3f0" stroke="#1e7d4e" strokeWidth="2" /><path d="M9 7c-3 3 3 11 8 11 3 0 3-3 2-4l-3-1-2 1c-2-1-3-2-3-4l1-1-1-3z" fill="#1e7d4e" /></Ic>, false],
  ['Edge', <Ic w={24} h={24}><circle cx="12" cy="12" r="11.5" fill="#1b6fc4" /><path d="M1 11C2-2 23-3 23.5 11c0 5-6 6-9 4 3-6-6-9-13.5-4z" fill="#3cc6a8" /><path d="M1 11c5-6 12-4 12 0-4 2-3 9 4 10C8 26-1 20 1 11z" fill="#1259a8" /><path d="M14.500 15c-1 3 4 4 8 1-1 3-3 5-5.500 6-5-1-7-6-2.500-7z" fill="#f0e7e0" /></Ic>, true],
  ['Chrome', <Ic w={32} h={30} className="mb-1"><circle cx="13" cy="18" r="11.5" fill="#fbc116" /><path d="M3 12a11.5 11.5 0 0120 0H13l-4 9z" fill="#e33b2e" /><path d="M3 12a11.5 11.5 0 009 17.5L17 21H9z" fill="#2ba24c" /><circle cx="13" cy="18" r="5.5" fill="#fff" /><circle cx="13" cy="18" r="4.3" fill="#2d73e0" /><circle cx="23" cy="8" r="7.5" fill="#ea6b0e" /><text x="23" y="11" fontSize="8" fill="#fff" textAnchor="middle">C</text></Ic>, true],
  ['Explorateur', <Ic w={24} h={24}><path d="M0 2h9l2 3h13v8H0z" fill="#e8a415" /><path d="M0 6h24v16H0z" fill="#fdd04d" /><path d="M4 16h16v6H4z" fill="#1a7ad0" /></Ic>, false],
  ['AMD', <Ic w={24} h={24}><rect width="24" height="24" fill="#e0042e" /><path d="M6 5h13v13l-4-4V9h-5zM6 13l4-4v6h5l-4 4H6z" fill="#fff" /></Ic>, false],
  ['F', <span className="flex h-[18px] w-[18px] items-center justify-center rounded-sm bg-[#3c3f43] text-[10px] text-white">F</span>, false],
  ['Brave', <Ic w={24} h={24}><path d="M7 0h10l2 2 3 3-1 4-1 7-8 7.500L4 16 3 9 2 5l3-3z" fill="#f4511e" /><path d="M6 5l3-1 3 1 3-1 3 1 2 4-3 5 1 2-6 5-6-5 1-2-3-5z" fill="#fff" /><path d="M7 8l4 1-1 3-2-1zM17 8l-4 1 1 3 2-1zM12 13l3 2-3 3-3-3z" fill="#f4511e" /></Ic>, false],
  ['ProRealTime ouvert', CandleTile, true],
  ['Bloc-notes', <Ic w={24} h={24}><path d="M3 2h18v20H3z" fill="#3cb6e0" /><path d="M3 22h18v2H3z" fill="#a8642a" /><path d="M5 0v4M8 0v4M11 0v4M14 0v4M17 0v4M20 0v4" stroke="#155a80" strokeWidth="1.5" /><path d="M6 9h12M6 13h12M6 17h12" stroke="#0f5f90" strokeWidth="1.8" /></Ic>, true],
];

function Taskbar() {
  return (
    <footer className="flex h-[48px] shrink-0 items-center bg-[linear-gradient(90deg,#d6ecd9_0%,#cdeedd_9%,#dcebe3_22%,#e6e6e4_32%,#e9e6e4_44%,#f4e5da_52%,#efe6db_68%,#e8e4e8_82%,#e2e4ec_100%)] font-['Noto_Sans',sans-serif] text-[#222]">
      <div className="flex flex-1 items-center gap-2 pl-[20px]">
        <Ic w={22} h={22} vb="0 0 24 24"><circle cx="12" cy="12" r="11" fill="#f3991f" /><path d="M11 20c-4-1-3-5 0-5 1-4 7-4 8 0 5 0 5 5 1 5z" fill="#bccbf0" /></Ic>
        <div className="text-[11px] leading-4"><div>17°C</div><div className="text-[#555]">Très ensoleillé</div></div>
      </div>
      <div className="ml-3 flex items-center">
        <button type="button" aria-label="Démarrer" className="mr-[13px]">
          <Ic w={24} h={24}><path d="M0 0h11.5v11.5H0z" fill="#35b6f2" /><path d="M12.5 0H24v11.5H12.5z" fill="#22a0e8" /><path d="M0 12.5h11.5V24H0z" fill="#1e94e0" /><path d="M12.5 12.5H24V24H12.5z" fill="#0c78d0" /></Ic>
        </button>
        <label className="mr-px flex h-[32px] w-[220px] items-center gap-3 rounded-full border border-[#cfcfcf] bg-[#f9f9f9] px-[10px]">
          <Ic w={16} h={16}><circle cx="7" cy="7" r="5.5" stroke="#222" strokeWidth="1.6" /><path d="M11 11l4 4" stroke="#222" strokeWidth="2" /></Ic>
          <input aria-label="Rechercher" placeholder="Rechercher" className="min-w-0 flex-1 bg-transparent text-[13px] outline-none placeholder:text-[#555]" />
        </label>
        <div className="flex">
          {apps.map(([name, icon, open]) => (
            <button key={name} type="button" aria-label={name} className="relative flex h-[48px] w-[44px] items-center justify-center">
              {icon}
              {open && <span className="absolute bottom-[5px] h-[3px] w-[6px] rounded-full bg-[#888]" />}
            </button>
          ))}
        </div>
      </div>
      <div className="flex flex-1 items-center justify-end pr-[19px]">
        <Ic w={11} h={7}><path d="M1 6l4.5-5L10 6" stroke="#222" strokeWidth="1.4" /></Ic>
        <Ic w={16} h={14} className="ml-[19px]"><path d="M1 5c4-5 10-5 14 0M3.5 7.5c3-3 6-3 9 0M5.5 10c2-2 3-2 5 0" stroke="#222" strokeWidth="1.3" /><circle cx="8" cy="12" r="1.3" fill="#222" /></Ic>
        <Ic w={17} h={14} className="ml-2"><path d="M1 5h3l3-4v12L4 9H1z" stroke="#222" /><path d="M9 5c1 1 1 3 0 4M11.5 3c2 2 2 6 0 8M14 1c3 3 3 9 0 12" stroke="#222" /></Ic>
        <div className="ml-[14px] text-right text-[12px] leading-4"><div>19:31</div><div>07/04/2025</div></div>
      </div>
    </footer>
  );
}

export default function App() {
  return (
    <div className="flex h-screen flex-col overflow-hidden bg-[#9ab8c6] font-['Liberation_Sans',Arial,sans-serif]">
      <div className="flex min-h-0 flex-1 flex-col border-r-2 border-b border-l border-[#3f5d6b]">
        <Header />
        <Toolbar />
        <div className="flex min-h-0 flex-1">
          <Sidebar />
          <main className="flex min-w-0 flex-1 flex-col">
            <div className="flex min-h-0 flex-[719] border-b border-[#6d8492]"><PricePanel /><PriceAxis /></div>
            <div className="flex min-h-0 flex-[215]"><IndicatorPanel /><IndicatorAxis /></div>
            <TimeAxis />
          </main>
        </div>
      </div>
      <Taskbar />
    </div>
  );
}
